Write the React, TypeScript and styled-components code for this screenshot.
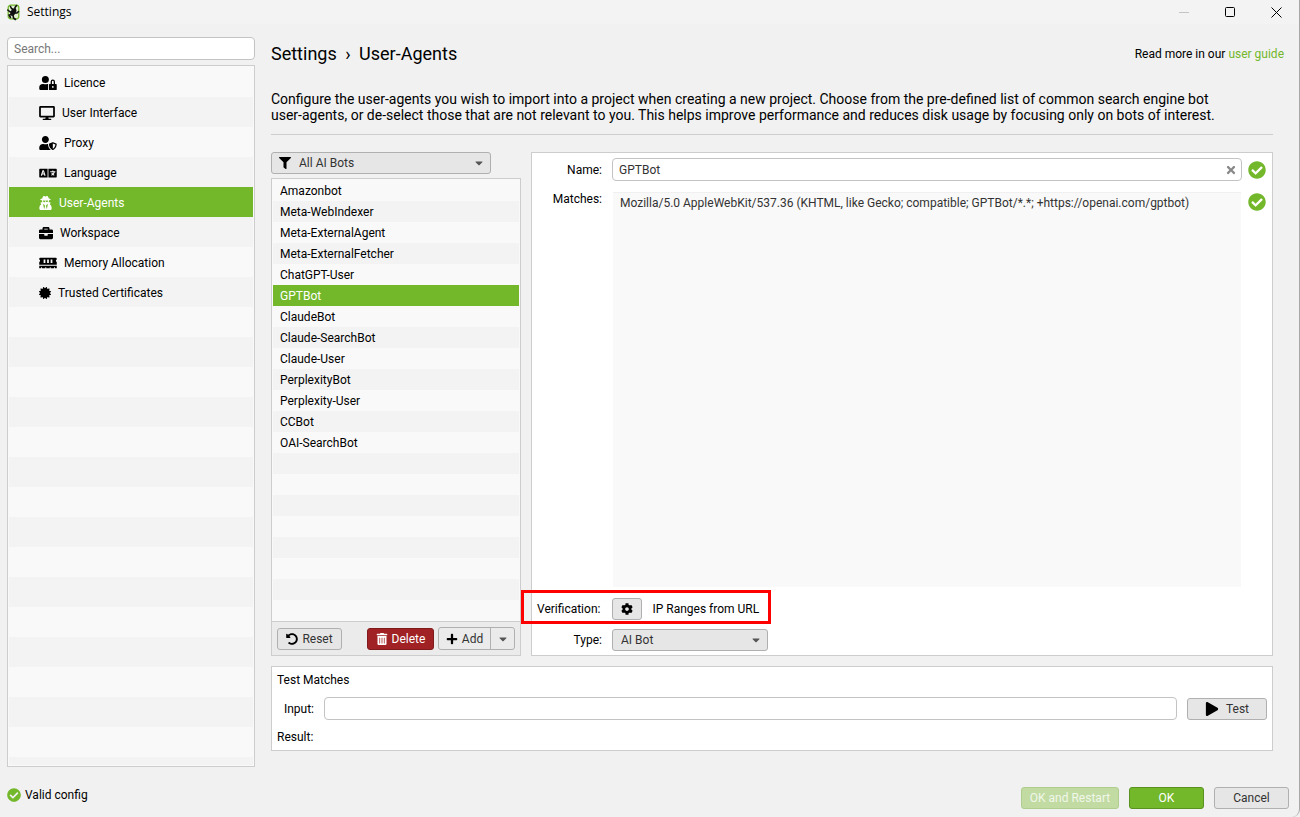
import React, { useState } from 'react';
import styled, { createGlobalStyle, css } from 'styled-components';
import type { IconType } from 'react-icons';
import {
  FaUserLock, FaDesktop, FaUserShield, FaLanguage, FaUserSecret, FaBriefcase, FaMemory,
  FaFilter, FaUndoAlt, FaTrashAlt, FaPlus, FaCog, FaPlay, FaTimes, FaCheckCircle, FaCaretDown,
} from 'react-icons/fa';
import { FaCertificate } from 'react-icons/fa6';

const green = '#73b72b';
const line = '#cdcdcd';

const GlobalStyle = createGlobalStyle`
  *, *::before, *::after { box-sizing: border-box; }
  body {
    margin: 0;
    background: #f1f1f1;
    color: #000;
    font: 12px/16px Roboto, "Liberation Sans", sans-serif;
  }
  button, input, select, textarea { font: inherit; margin: 0; }
  svg { display: block; flex: none; }
`;

const Window = styled.div`
  min-height: 100vh;
  display: flex;
  flex-direction: column;
  background: #f1f1f1;
  border-right: 1px solid #a8a8a8;
  border-bottom-right-radius: 8px;
`;

const TitleBar = styled.header`
  display: flex;
  align-items: center;
  height: 24px;
  padding: 0 17px 0 7px;
  background: #f3f3f3;
`;

const WindowTitle = styled.span`
  flex: 1;
  margin-left: 7px;
  font-family: "Open Sans", sans-serif;
`;

const CaptionButtons = styled.div`
  display: flex;
  gap: 35px;
`;

const CaptionButton = styled.button`
  padding: 0;
  border: 0;
  background: none;
  color: #000;
  &:disabled { color: #c4c4c4; }
`;

const Body = styled.div`
  flex: 1;
  display: flex;
  gap: 16px;
  padding: 13px 15px 0 7px;
`;

const Sidebar = styled.aside`
  width: 248px;
  flex: none;
  display: flex;
  flex-direction: column;
  gap: 5px;
`;

const field = css`
  height: 23px;
  border: 1px solid #c3c3c3;
  border-radius: 4px;
  background: #fff;
  color: #333;
  outline: 0;
`;

const TextField = styled.input`
  ${field}
  min-width: 0;
  padding: 0 6px;
  &::placeholder { color: #777; }
`;

const striped = (row: number) => css`
  margin: 0;
  padding: 1px;
  list-style: none;
  background: repeating-linear-gradient(#f9f9f9 0 ${row}px, #f3f3f3 ${row}px ${row * 2}px) content-box, #f9f9f9;
`;

const Nav = styled.ul`
  ${striped(30)}
  flex: 1;
  border: 1px solid ${line};
`;

const NavLink = styled.a<{ $active?: boolean }>`
  display: flex;
  align-items: center;
  gap: 7px;
  height: 30px;
  padding: 2px 0 0 30px;
  color: ${p => (p.$active ? '#fff' : '#000')};
  background: ${p => (p.$active ? green : 'transparent')};
  text-decoration: none;
`;

const NavIcon = styled.span<{ $width: number }>`
  width: ${p => p.$width}px;
  margin-bottom: 1px;
  svg { width: 100%; height: 14px; }
`;

const Main = styled.main`
  flex: 1;
  min-width: 0;
  display: flex;
  flex-direction: column;
  padding-bottom: 16px;
`;

const Heading = styled.div`
  display: flex;
  align-items: center;
  justify-content: space-between;
  height: 34px;
  h1 { margin: 0; font-size: 18px; line-height: 24px; font-weight: 400; }
  h1 span { margin: 0 4px; }
  p { margin: 0; }
  a { color: ${green}; text-decoration: none; }
`;

const Content = styled.div`
  flex: 1;
  display: flex;
  flex-direction: column;
  margin-right: 11px;
`;

const Description = styled.p`
  margin: 20px 0 0;
  padding-bottom: 11px;
  border-bottom: 1px solid ${line};
  font-size: 14px;
  line-height: 16px;
  span { white-space: nowrap; }
`;

const Columns = styled.div`
  flex: 1;
  display: flex;
  gap: 10px;
  margin: 17px 0 10px;
`;

const BotColumn = styled.section`
  width: 250px;
  flex: none;
  display: flex;
  flex-direction: column;
`;

const SelectWrap = styled.div<{ $width: number }>`
  position: relative;
  width: ${p => p.$width}px;
  height: 22px;
`;

const Select = styled.select<{ $icon?: boolean }>`
  appearance: none;
  width: 100%;
  height: 22px;
  padding: 0 24px 0 ${p => (p.$icon ? 27 : 8)}px;
  border: 1px solid #b0b0b0;
  border-radius: 3px;
  background: #e6e6e6;
  color: #333;
  outline: 0;
`;

const Overlay = styled.span<{ $side: 'left' | 'right' }>`
  position: absolute;
  top: 0;
  bottom: 0;
  ${p => (p.$side === 'left' ? 'left: 8px' : 'right: 6px')};
  display: flex;
  align-items: center;
  pointer-events: none;
  color: ${p => (p.$side === 'left' ? '#000' : '#555')};
`;

const BotBox = styled.div`
  flex: 1;
  display: flex;
  flex-direction: column;
  margin-top: 4px;
  border: 1px solid ${line};
`;

const BotList = styled.ul`
  ${striped(21)}
  flex: 1;
`;

const BotItem = styled.li<{ $active: boolean }>`
  height: 21px;
  padding-left: 7px;
  line-height: 23px;
  cursor: default;
  color: ${p => (p.$active ? '#fff' : '#000')};
  background: ${p => (p.$active ? green : 'transparent')};
`;

const BotActions = styled.div`
  display: flex;
  align-items: center;
  height: 34px;
  padding: 0 5px;
  border-top: 1px solid ${line};
  background: #ebebeb;
`;

const tones = {
  plain: ['#e6e6e6', '#b0b0b0', '#333'],
  primary: [green, '#5a9220', '#fff'],
  danger: ['#a02224', '#801a1c', '#fff'],
  muted: ['#c1dba3', '#b0cd90', '#f1f7ea'],
};

const Button = styled.button<{ $tone?: keyof typeof tones; $width: number; $gap?: number }>`
  display: flex;
  align-items: center;
  justify-content: center;
  gap: ${p => p.$gap ?? 4}px;
  width: ${p => p.$width}px;
  height: 22px;
  padding: 0;
  border: 1px solid ${p => tones[p.$tone ?? 'plain'][1]};
  border-radius: 3px;
  background: ${p => tones[p.$tone ?? 'plain'][0]};
  color: ${p => tones[p.$tone ?? 'plain'][2]};
  white-space: nowrap;
`;

const Split = styled.div`
  display: flex;
  height: 23px;
  margin-left: 4px;
  border: 1px solid #b0b0b0;
  border-radius: 3px;
  button {
    display: flex;
    align-items: center;
    justify-content: center;
    gap: 4px;
    padding: 0;
    border: 0;
    background: none;
    color: #333;
  }
  button:first-child { width: 51px; }
  button:last-child { width: 24px; border-left: 1px solid #b0b0b0; color: #555; }
`;

const Spacer = styled.div`
  flex: 1;
`;

const Panel = styled.section`
  display: flex;
  flex-direction: column;
  border: 1px solid ${line};
  background: #fff;
`;

const DetailPanel = styled(Panel)`
  flex: 1;
  min-width: 0;
  padding: 5px 6px 4px 5px;
`;

const FormRow = styled.div<{ $grow?: boolean }>`
  flex: ${p => (p.$grow ? '1' : 'none')};
  display: grid;
  grid-template-columns: 65px minmax(0, 1fr) 18px;
  column-gap: 10px;
  align-items: ${p => (p.$grow ? 'stretch' : 'center')};
  margin-top: ${p => (p.$grow ? 10 : 0)}px;
  label { text-align: right; }
  > svg { margin-top: ${p => (p.$grow ? 2 : 0)}px; }
`;

const NameField = styled.div`
  ${field}
  display: flex;
  align-items: center;
  margin-right: -4px;
  padding: 0 4px 0 6px;
  input {
    flex: 1;
    min-width: 0;
    padding: 0;
    border: 0;
    background: none;
    color: #333;
    outline: 0;
  }
  button { padding: 0; border: 0; background: none; color: #888; }
`;

const MatchHolder = styled.div`
  display: flex;
  margin: 1px -3px 0 1px;
`;

const MatchField = styled.textarea`
  display: block;
  width: 100%;
  height: 100%;
  padding: 2px 7px;
  border: 0;
  border-top: 1px solid #f0f0f0;
  background: #f9f9f9;
  color: #333;
  resize: none;
  outline: 0;
`;

const Callout = styled.div`
  position: relative;
  display: flex;
  align-items: center;
  align-self: flex-start;
  gap: 10px;
  height: 34px;
  margin: 3px 0 5px -16px;
  padding: 3px 9px 0 13px;
  border: 3px solid #f00;
  label { padding-right: 2px; }
`;

const TestPanel = styled(Panel)`
  height: 85px;
  flex: none;
  padding: 5px;
  justify-content: space-between;
`;

const TestRow = styled.div`
  display: flex;
  align-items: center;
  label { width: 37px; margin-right: 10px; text-align: right; }
  input { flex: 1; margin-right: 10px; }
`;

const Footer = styled.footer`
  display: flex;
  align-items: center;
  gap: 10px;
  height: 50px;
  padding: 12px 10px 0 7px;
`;

const Status = styled.div`
  flex: 1;
  display: flex;
  align-items: center;
  gap: 4px;
  padding-bottom: 6px;
`;

const NAV: { label: string; Icon: IconType; width: number }[] = [
  { label: 'Licence', Icon: FaUserLock, width: 18 },
  { label: 'User Interface', Icon: FaDesktop, width: 16 },
  { label: 'Proxy', Icon: FaUserShield, width: 18 },
  { label: 'Language', Icon: FaLanguage, width: 18 },
  { label: 'User-Agents', Icon: FaUserSecret, width: 13 },
  { label: 'Workspace', Icon: FaBriefcase, width: 14 },
  { label: 'Memory Allocation', Icon: FaMemory, width: 18 },
  { label: 'Trusted Certificates', Icon: FaCertificate, width: 12 },
];

const BOTS = [
  'Amazonbot', 'Meta-WebIndexer', 'Meta-ExternalAgent', 'Meta-ExternalFetcher', 'ChatGPT-User', 'GPTBot',
  'ClaudeBot', 'Claude-SearchBot', 'Claude-User', 'PerplexityBot', 'Perplexity-User', 'CCBot', 'OAI-SearchBot',
];

const Frog = () => (
  <svg width="13" height="17" viewBox="0 0 13 17" aria-hidden="true">
    <rect x="1.2" y="1.2" width="10.6" height="13.6" rx="2.5" fill="#e3f0d2" stroke={green} strokeWidth="1.3" />
    <ellipse cx="6.3" cy="8" rx="2.6" ry="4" fill="#111" transform="rotate(30 6.3 8)" />
    <g fill="none" stroke="#111" strokeWidth="1.6" strokeLinecap="round" strokeLinejoin="round">
      <path d="M7 6L4.5 4.5 3.5 2.5M8 6.5L8 3.5 9.5 1.5" />
      <path d="M5.5 8.5L2.5 7.5 0.8 6M7.5 9L10 9 11.5 7.5" />
      <path d="M5 10.5L2 11 3.5 13.5M6 11L6.5 14 8.5 15.5" />
    </g>
  </svg>
);

export default function App() {
  const [bot, setBot] = useState('GPTBot');
  return (
    <>
      <GlobalStyle />
      <Window>
        <TitleBar>
          <Frog />
          <WindowTitle>Settings</WindowTitle>
          <CaptionButtons>
            <CaptionButton disabled aria-label="Minimise">
              <svg width="11" height="11" fill="none" stroke="currentColor"><path d="M0 5.5h10" /></svg>
            </CaptionButton>
            <CaptionButton aria-label="Maximise">
              <svg width="11" height="11" fill="none" stroke="currentColor"><rect x="0.5" y="0.5" width="9" height="9" rx="1" /></svg>
            </CaptionButton>
            <CaptionButton aria-label="Close">
              <svg width="11" height="11" fill="none" stroke="currentColor"><path d="M0.5 0.5l10 10M10.5 0.5l-10 10" /></svg>
            </CaptionButton>
          </CaptionButtons>
        </TitleBar>

        <Body>
          <Sidebar>
            <TextField type="search" placeholder="Search..." aria-label="Search" />
            <Nav>
              {NAV.map(({ label, Icon, width }) => (
                <li key={label}>
                  <NavLink href="#" $active={label === 'User-Agents'}>
                    <NavIcon $width={width}><Icon /></NavIcon>
                    {label}
                  </NavLink>
                </li>
              ))}
            </Nav>
          </Sidebar>

          <Main>
            <Heading>
              <h1>Settings <span>›</span> User-Agents</h1>
              <p>Read more in our <a href="#guide">user guide</a></p>
            </Heading>
            <Content>
              <Description>
                Configure the user-agents you wish to import into a project when creating a new project. Choose from the
                pre-defined list of common search engine bot <span>user-agents,</span> or de-select those that are not
                relevant to you. This helps improve performance and reduces disk usage by focusing only on bots of
                interest.
              </Description>

              <Columns>
                <BotColumn>
                  <SelectWrap $width={220}>
                    <Select $icon aria-label="Filter user-agents"><option>All AI Bots</option></Select>
                    <Overlay $side="left"><FaFilter size={12} /></Overlay>
                    <Overlay $side="right"><FaCaretDown size={12} /></Overlay>
                  </SelectWrap>
                  <BotBox>
                    <BotList>
                      {BOTS.map(name => (
                        <BotItem key={name} $active={name === bot} onClick={() => setBot(name)}>{name}</BotItem>
                      ))}
                    </BotList>
                    <BotActions>
                      <Button $width={65}><FaUndoAlt size={12} color="#000" />Reset</Button>
                      <Spacer />
                      <Button $width={67} $tone="danger"><FaTrashAlt size={12} />Delete</Button>
                      <Split>
                        <button><FaPlus size={12} color="#000" />Add</button>
                        <button aria-label="More add options"><FaCaretDown size={12} /></button>
                      </Split>
                    </BotActions>
                  </BotBox>
                </BotColumn>

                <DetailPanel>
                  <FormRow>
                    <label htmlFor="name">Name:</label>
                    <NameField>
                      <input id="name" type="text" value={bot} onChange={e => setBot(e.target.value)} />
                      <button aria-label="Clear name"><FaTimes size={12} /></button>
                    </NameField>
                    <FaCheckCircle size={18} color={green} />
                  </FormRow>
                  <FormRow $grow>
                    <label htmlFor="matches">Matches:</label>
                    <MatchHolder>
                      <MatchField
                        id="matches"
                        defaultValue="Mozilla/5.0 AppleWebKit/537.36 (KHTML, like Gecko; compatible; GPTBot/*.*; +https://openai.com/gptbot)"
                      />
                    </MatchHolder>
                    <FaCheckCircle size={18} color={green} />
                  </FormRow>
                  <Callout>
                    <label htmlFor="verification">Verification:</label>
                    <Button id="verification" $width={30} aria-label="Configure verification">
                      <FaCog size={12} color="#000" />
                    </Button>
                    <span>IP Ranges from URL</span>
                  </Callout>
                  <FormRow>
                    <label htmlFor="type">Type:</label>
                    <SelectWrap $width={156}>
                      <Select id="type"><option>AI Bot</option></Select>
                      <Overlay $side="right"><FaCaretDown size={12} /></Overlay>
                    </SelectWrap>
                  </FormRow>
                </DetailPanel>
              </Columns>

              <TestPanel>
                <div>Test Matches</div>
                <TestRow>
                  <label htmlFor="test-input">Input:</label>
                  <TextField id="test-input" type="text" />
                  <Button $width={80} $gap={7}><FaPlay size={14} color="#000" />Test</Button>
                </TestRow>
                <div>Result:</div>
              </TestPanel>
            </Content>
          </Main>
        </Body>

        <Footer>
          <Status><FaCheckCircle size={14} color={green} />Valid config</Status>
          <Button $width={98} $tone="muted" disabled>OK and Restart</Button>
          <Button $width={75} $tone="primary">OK</Button>
          <Button $width={75}>Cancel</Button>
        </Footer>
      </Window>
    </>
  );
}
